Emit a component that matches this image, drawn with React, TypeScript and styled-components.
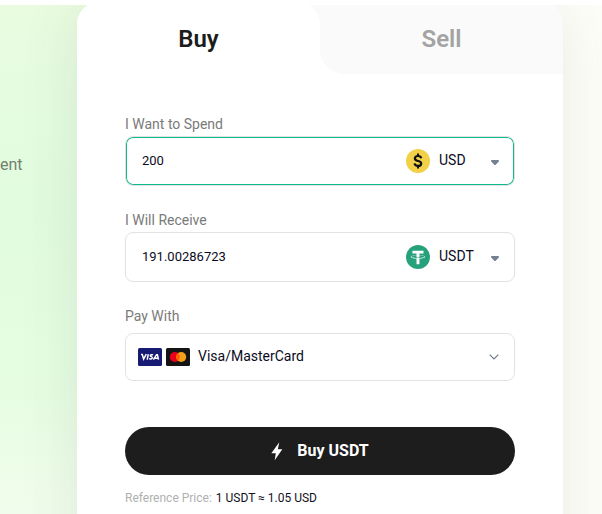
import React, { useState } from "react";
import styled, { createGlobalStyle } from "styled-components";

const GlobalStyle = createGlobalStyle`
  * { box-sizing: border-box; }
  body {
    margin: 0;
    background: #fff;
    font-family: Roboto, "Liberation Sans", sans-serif;
    color: #0b0b1e;
  }
  button, input, select { font-family: inherit; color: inherit; }
`;

const Page = styled.div`
  display: flex;
  flex-direction: column;
  height: 100vh;
  padding-top: 5px;
  overflow: hidden;
`;

const Hero = styled.main`
  flex: 1;
  min-height: 0;
  display: grid;
  grid-template-columns: 77px minmax(0, 1fr) 39px;
  overflow: hidden;
  background:
    linear-gradient(90deg, rgba(254, 254, 248, 0) 20%, #fefef8 85%),
    linear-gradient(180deg, #e9fce0 0%, #e1fcdf 40%, #e6fde2 75%, #f1fdec 100%);
`;

const Intro = styled.p`
  margin: 148px 0 0;
  font-size: 16px;
  line-height: 24px;
  color: #71806f;
`;

const Card = styled.section`
  margin-top: -4px;
  min-height: 600px;
  border-radius: 24px;
  background: #fff;
  box-shadow: 0 4px 60px rgba(70, 75, 70, 0.11);
`;

const Tabs = styled.div`
  display: grid;
  grid-template-columns: 1fr 1fr;
  height: 73px;
`;

const TabBacking = styled.div<{ $color: string }>`
  display: grid;
  background: ${(p) => p.$color};
  &:first-child { border-top-left-radius: 24px; }
  &:last-child { border-top-right-radius: 24px; }
`;

const Tab = styled.button<{ $active: boolean }>`
  border: 0;
  padding: 2px 0 0;
  font-size: 24px;
  line-height: 32px;
  font-weight: 600;
  color: ${(p) => (p.$active ? "#1c1c1c" : "#a3a3a3")};
  background: ${(p) => (p.$active ? "#fff" : "#fafafa")};
  border-radius: ${(p) => (p.$active ? "24px 24px 0 0" : "0 24px 0 24px")};
  cursor: pointer;
`;

const Form = styled.form`
  display: flex;
  flex-direction: column;
  padding: 40px 48px 0;
`;

const Field = styled.div<{ $gap: number }>`
  display: flex;
  flex-direction: column;
  gap: ${(p) => p.$gap}px;
  margin-bottom: 24px;
`;

const Label = styled.label`
  font-size: 14px;
  line-height: 20px;
  color: #7a7a7a;
`;

const Box = styled.div<{ $active?: boolean; $height: number; $pad: number }>`
  display: flex;
  align-items: center;
  height: ${(p) => p.$height}px;
  padding: 0 12px 0 ${(p) => p.$pad}px;
  border: 1px solid #e1e3e3;
  border-radius: 8px;
  background: #fff;
  box-shadow: ${(p) => (p.$active ? "inset 0 0 0 1px #10b98a" : "none")};
`;

const Amount = styled.input`
  flex: 1;
  min-width: 0;
  padding: 0;
  border: 0;
  outline: 0;
  background: transparent;
  font-size: 13px;
  line-height: 20px;
`;

const Picker = styled.div`
  display: flex;
  align-items: center;
  gap: 9px;
  width: 96px;
`;

const Select = styled.select`
  flex: 1;
  min-width: 0;
  padding: 0 0 2px;
  border: 0;
  outline: 0;
  appearance: none;
  background: transparent;
  font-size: 14px;
  line-height: 20px;
  cursor: pointer;
`;

const CaretSlot = styled.div`
  display: flex;
  padding-top: 2px;
  margin-right: 3px;
`;

const Cards = styled.div`
  display: flex;
  gap: 4px;
  margin-right: 8px;
`;

const Icon = styled.svg`
  display: block;
  flex: none;
`;

const Submit = styled.button`
  display: flex;
  align-items: center;
  justify-content: center;
  gap: 8px;
  height: 48px;
  margin-top: 22px;
  padding: 0 6px 0 0;
  border: 0;
  border-radius: 24px;
  background: #1d1d1d;
  color: #fff;
  font-size: 16px;
  font-weight: 700;
  line-height: 24px;
  cursor: pointer;
`;

const Price = styled.p`
  margin: 13px 0 0;
  font-size: 12px;
  line-height: 20px;
  color: #b0b0b0;
`;

const PriceValue = styled.span`
  margin-left: 1px;
  color: #12121c;
`;

const Dollar = () => (
  <Icon width="24" height="24" viewBox="0 0 24 24" aria-hidden="true">
    <circle cx="12" cy="12" r="12" fill="#f2d148" />
    <path d="M15.2 9.2C14.9 7.8 13.7 7 12 7c-1.800 0-3.100.9-3.100 2.400 0 3.500 6.300 1.700 6.300 5 0 1.600-1.300 2.500-3.200 2.500-1.900 0-3.200-.9-3.400-2.500" fill="none" stroke="#111" strokeWidth="2.200" />
    <path d="M12 4.600v3M12 16.400v3" stroke="#111" strokeWidth="2" />
  </Icon>
);

const Tether = () => (
  <Icon width="24" height="24" viewBox="0 0 32 32" aria-hidden="true">
    <circle cx="16" cy="16" r="16" fill="#26a17b" />
    <path
      fill="#fff"
      d="M17.922 17.383v-.002c-.11.008-.677.042-1.942.042-1.010 0-1.721-.03-1.971-.042v.003c-3.888-.171-6.790-.848-6.790-1.658 0-.809 2.902-1.486 6.790-1.660v2.644c.254.018.982.061 1.988.061 1.207 0 1.812-.05 1.925-.06v-2.643c3.880.173 6.775.85 6.775 1.658 0 .810-2.895 1.485-6.775 1.657m0-3.590v-2.366h5.414V7.819H8.595v3.608h5.414v2.365c-4.400.202-7.709 1.074-7.709 2.118 0 1.044 3.309 1.915 7.709 2.118v7.582h3.913v-7.584c4.393-.202 7.694-1.073 7.694-2.116 0-1.043-3.301-1.914-7.694-2.117"
    />
  </Icon>
);

const Caret = () => (
  <Icon width="8" height="5" viewBox="0 0 8 5" aria-hidden="true">
    <path d="M.8 0h6.400q.8 0 .8.800 0 .3-.3.700L5 4.400q-1 1-2 0L.3 1.500Q0 1.100 0 .800 0 0 .800 0z" fill="#758190" />
  </Icon>
);

const Chevron = () => (
  <Icon width="16" height="16" viewBox="0 0 16 16" aria-hidden="true">
    <path d="M3.700 5.700 8 10l4.300-4.300" fill="none" stroke="#6c7887" strokeWidth="1.100" />
  </Icon>
);

const Visa = () => (
  <Icon width="24" height="18" viewBox="0 0 24 18" aria-hidden="true">
    <rect width="24" height="18" rx="1.500" fill="#171b74" />
    <g fill="none" stroke="#fff" strokeWidth="1.500">
      <path d="M3 6.500h1.300L5.600 11 8.300 6.200" />
      <path d="M10.300 6.200 9.200 11.700" />
      <path d="M15.100 6.900c-1.300-.5-2.700-.2-2.800.7-.1 1.200 2.200.9 2 2.300-.2 1.200-1.900 1.400-3.300.7" />
      <path d="M15.400 11.700 18.600 6.700h.8l1.100 5M16.900 10.200h3" />
    </g>
  </Icon>
);

const Mastercard = () => (
  <Icon width="24" height="18" viewBox="0 0 24 18" aria-hidden="true">
    <rect width="24" height="18" rx="1.500" fill="#141414" />
    <circle cx="8.800" cy="9" r="5" fill="#eb001b" />
    <circle cx="15.200" cy="9" r="5" fill="#f79e1b" />
    <path d="M12 5.160a5 5 0 0 1 0 7.680 5 5 0 0 1 0-7.680z" fill="#ff5f00" />
  </Icon>
);

const Bolt = () => (
  <Icon width="24" height="24" viewBox="0 0 24 24" aria-hidden="true">
    <path d="M14.300 3.300 6.300 14.300h4.500L9.700 21.300 17.300 10.300h-4.500z" fill="#fff" />
  </Icon>
);

export default function App() {
  const [side, setSide] = useState("buy");
  const [spend, setSpend] = useState("200");
  const [receive, setReceive] = useState("191.00286723");

  return (
    <>
      <GlobalStyle />
      <Page>
        <Hero>
          <Intro>ent</Intro>
          <Card>
            <Tabs role="tablist">
              <TabBacking $color={side === "buy" ? "#fafafa" : "#fff"}>
                <Tab type="button" role="tab" aria-selected={side === "buy"} $active={side === "buy"} onClick={() => setSide("buy")}>
                  Buy
                </Tab>
              </TabBacking>
              <TabBacking $color="#fff">
                <Tab type="button" role="tab" aria-selected={side === "sell"} $active={side === "sell"} onClick={() => setSide("sell")}>
                  Sell
                </Tab>
              </TabBacking>
            </Tabs>
            <Form onSubmit={(e) => e.preventDefault()}>
              <Field $gap={2}>
                <Label htmlFor="spend">I Want to Spend</Label>
                <Box $active $height={50} $pad={16}>
                  <Amount id="spend" value={spend} onChange={(e) => setSpend(e.target.value)} />
                  <Picker>
                    <Dollar />
                    <Select aria-label="Currency to spend">
                      <option>USD</option>
                    </Select>
                    <CaretSlot>
                      <Caret />
                    </CaretSlot>
                  </Picker>
                </Box>
              </Field>
              <Field $gap={2}>
                <Label htmlFor="receive">I Will Receive</Label>
                <Box $height={50} $pad={16}>
                  <Amount id="receive" value={receive} onChange={(e) => setReceive(e.target.value)} />
                  <Picker>
                    <Tether />
                    <Select aria-label="Currency to receive">
                      <option>USDT</option>
                    </Select>
                    <CaretSlot>
                      <Caret />
                    </CaretSlot>
                  </Picker>
                </Box>
              </Field>
              <Field $gap={7}>
                <Label htmlFor="method">Pay With</Label>
                <Box $height={48} $pad={12}>
                  <Cards>
                    <Visa />
                    <Mastercard />
                  </Cards>
                  <Select id="method">
                    <option>Visa/MasterCard</option>
                  </Select>
                  <Chevron />
                </Box>
              </Field>
              <Submit type="submit">
                <Bolt />
                Buy USDT
              </Submit>
              <Price>
                Reference Price: <PriceValue>1 USDT ≈ 1.05 USD</PriceValue>
              </Price>
            </Form>
          </Card>
        </Hero>
      </Page>
    </>
  );
}
